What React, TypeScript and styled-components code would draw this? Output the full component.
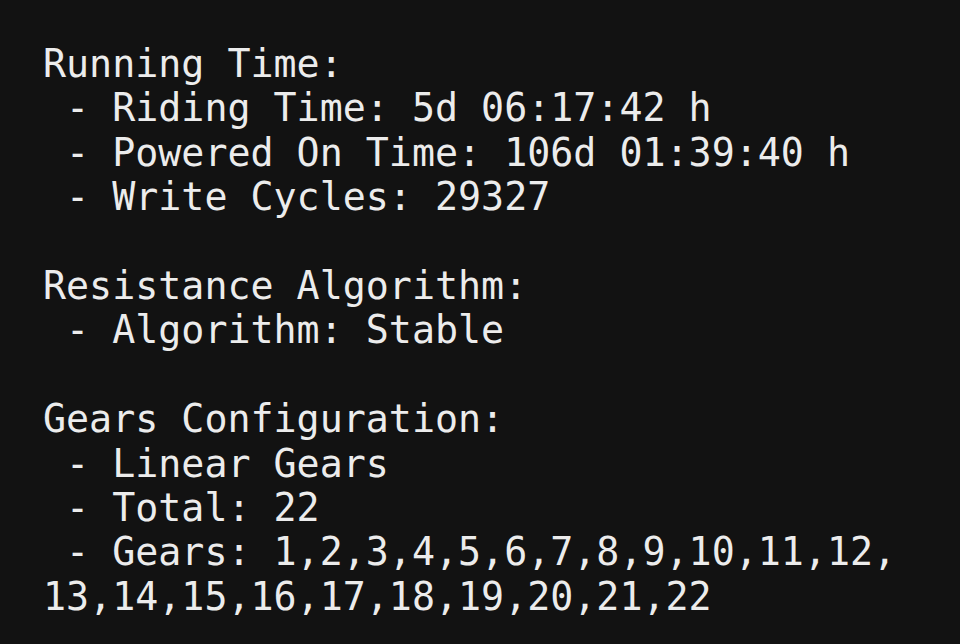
import React from "react";
import styled, { createGlobalStyle } from "styled-components";

const Global = createGlobalStyle`
  html, body { margin: 0; padding: 0; background: #121212; }
  body { width: 960px; height: 644px; overflow: hidden; }
`;

const Screen = styled.main`
  box-sizing: border-box;
  width: 960px;
  height: 644px;
  background: #121212;
  padding: 42px 0 0 43px;
`;

const Output = styled.pre`
  margin: 0;
  font-family: "DejaVu Sans Mono", "Liberation Mono", monospace;
  font-size: 38.3px;
  line-height: 44.4px;
  color: #ececec;
  white-space: pre;
`;

const lines = [
  "Running Time:",
  " - Riding Time: 5d 06:17:42 h",
  " - Powered On Time: 106d 01:39:40 h",
  " - Write Cycles: 29327",
  "",
  "Resistance Algorithm:",
  " - Algorithm: Stable",
  "",
  "Gears Configuration:",
  " - Linear Gears",
  " - Total: 22",
  " - Gears: 1,2,3,4,5,6,7,8,9,10,11,12,",
  "13,14,15,16,17,18,19,20,21,22",
];

export default function App() {
  return (
    <>
      <Global />
      <Screen>
        <Output>{lines.join("\n")}</Output>
      </Screen>
    </>
  );
}
